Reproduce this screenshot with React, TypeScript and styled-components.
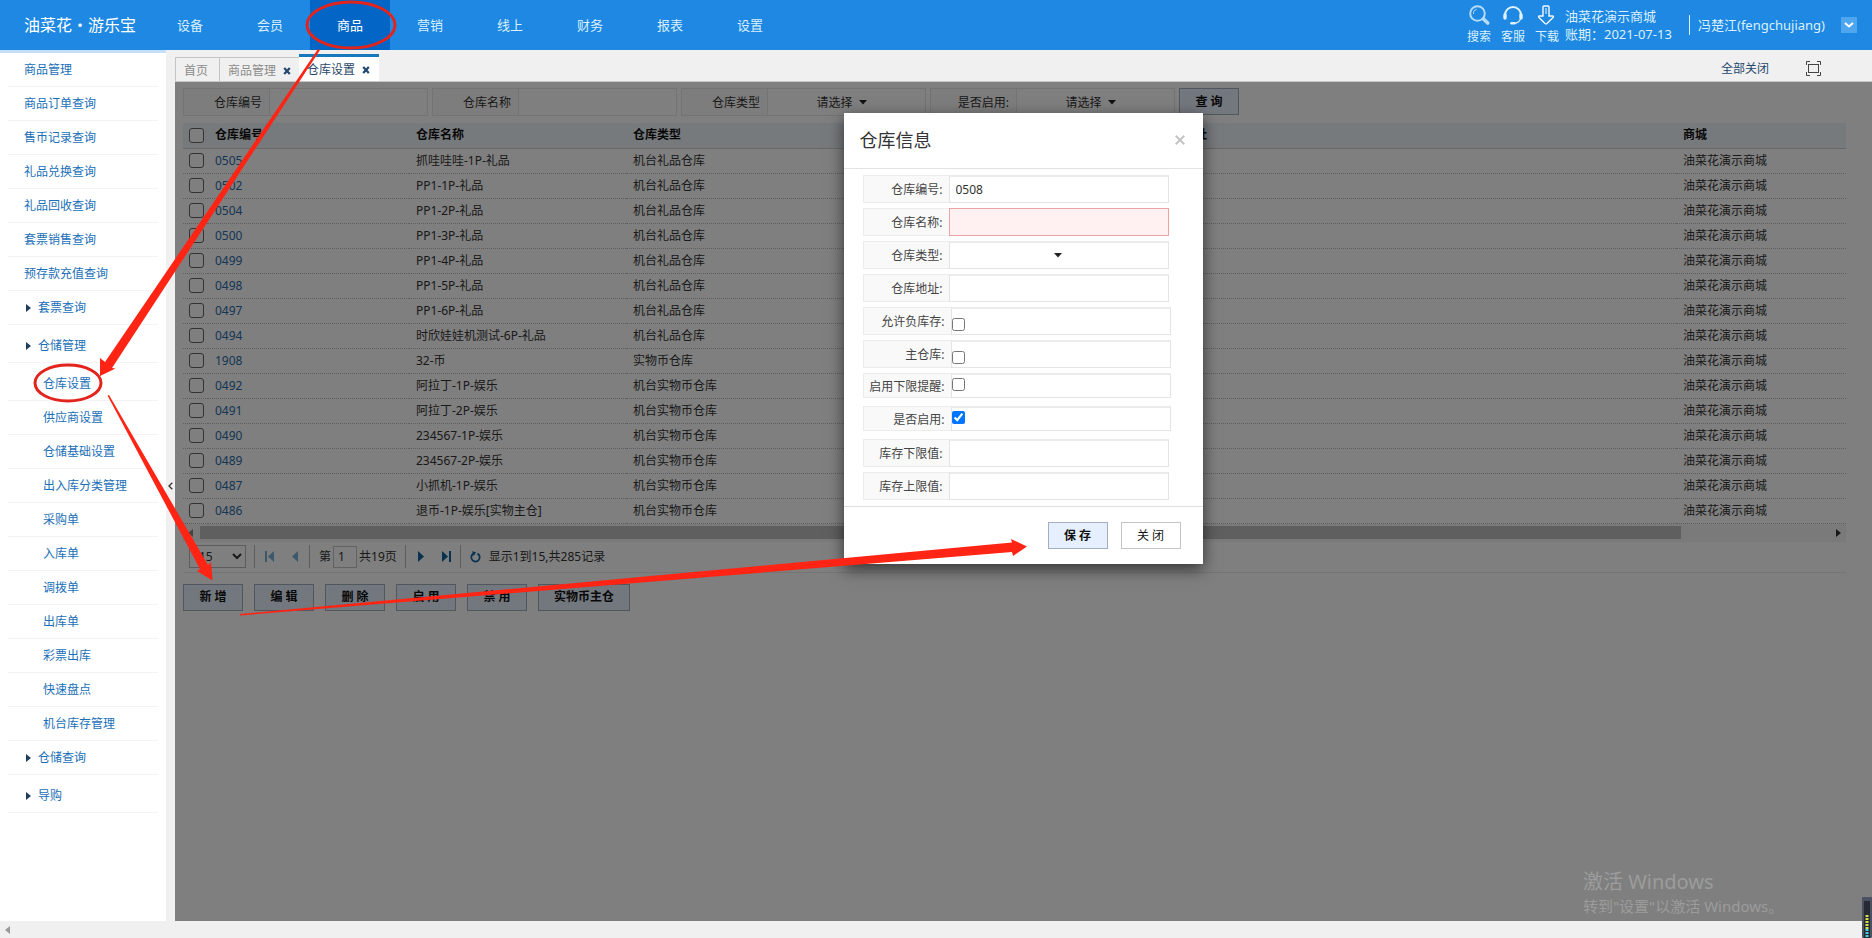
import React from "react";
import styled, { createGlobalStyle, css } from "styled-components";

const Global = createGlobalStyle`
  *, *::before, *::after { box-sizing: border-box; }
  html, body, #root { height: 100%; }
  body {
    margin: 0;
    overflow: hidden;
    background: #f0f0f0;
    color: #333;
    font: 12px/16px "Noto Sans", "Noto Sans CJK SC", sans-serif;
  }
  button, input, select { font: inherit; color: inherit; margin: 0; }
  a { color: inherit; text-decoration: none; }
`;

const Page = styled.div`
  position: relative;
  display: flex;
  flex-direction: column;
  height: 100vh;
`;

/* ---------- header ---------- */
const Header = styled.header`
  display: flex;
  flex: none;
  align-items: center;
  height: 50px;
  background: #1e88e2;
  color: #d9f0ff;
`;
const Logo = styled.div`
  width: 150px;
  padding-left: 24px;
  font-size: 16px;
  line-height: 24px;
  white-space: nowrap;
  color: #fff;
`;
const Nav = styled.nav`
  display: flex;
  flex: 1;
  height: 100%;
`;
const NavLink = styled.a<{ $active?: boolean }>`
  display: flex;
  width: 80px;
  align-items: center;
  justify-content: center;
  font-size: 13px;
  background: ${(p) => (p.$active ? "#0366c6" : "transparent")};
  color: ${(p) => (p.$active ? "#fff" : "#d9f0ff")};
`;
const Tools = styled.div`
  display: flex;
  gap: 10px;
`;
const Tool = styled.a`
  display: flex;
  flex-direction: column;
  align-items: center;
  width: 24px;
  gap: 4px;
  white-space: nowrap;
  svg { display: block; }
`;
const Store = styled.div`
  width: 130px;
  padding-left: 6px;
  font-size: 13px;
  line-height: 18px;
  white-space: nowrap;
`;
const Account = styled.div`
  display: flex;
  align-items: center;
  justify-content: space-between;
  width: 168px;
  height: 20px;
  margin-right: 15px;
  padding-left: 8px;
  border-left: 1px solid #d9f0ff;
  font-size: 13px;
`;
const AccountToggle = styled.button`
  display: grid;
  place-items: center;
  width: 16px;
  height: 16px;
  padding: 0;
  border: 0;
  background: #4ea6ef;
`;

/* ---------- sidebar ---------- */
const Body = styled.div`
  display: flex;
  flex: 1;
  min-height: 0;
`;
const Sidebar = styled.nav`
  flex: none;
  width: 166px;
  padding: 0 8px;
  border-top: 3px solid #c4e0f8;
  background: #fff;
`;
const SideLink = styled.a<{ $level: "top" | "group" | "sub"; $spaced?: boolean }>`
  display: flex;
  align-items: center;
  gap: 7px;
  height: ${(p) => (p.$spaced ? 38 : 34)}px;
  padding-top: ${(p) => (p.$spaced ? 4 : 0)}px;
  padding-left: ${(p) => ({ top: 16, group: 18, sub: 35 })[p.$level]}px;
  border-bottom: 1px solid #f3f3f3;
  color: #1b6fb8;
`;
const Collapse = styled.button`
  display: grid;
  place-items: center;
  flex: none;
  width: 9px;
  padding: 0;
  border: 0;
  background: #f0f0f0;
`;

/* ---------- tabs ---------- */
const Main = styled.main`
  display: flex;
  flex: 1;
  flex-direction: column;
  min-width: 0;
`;
const TabBar = styled.div`
  display: flex;
  flex: none;
  align-items: flex-end;
  height: 32px;
  border-bottom: 1px solid #c8c8c8;
`;
const Tab = styled.div<{ $active?: boolean }>`
  display: flex;
  align-items: center;
  gap: 7px;
  height: 24px;
  padding: 2px 8px 0 8px;
  border: 1px solid #c4c4c4;
  border-width: 1px 1px 0;
  margin-right: -1px;
  color: #8b8b8b;
  &:first-child { padding-right: 11px; }
  ${(p) =>
    p.$active &&
    css`
      height: 27px;
      padding-right: 9px;
      margin-right: 0;
      border: 0;
      border-top: 3px solid #1878bd;
      background: #fff;
      color: #2a4766;
    `}
`;
const TabClose = styled.button`
  display: grid;
  place-items: center;
  padding: 0;
  border: 0;
  background: none;
`;
const TabActions = styled.div`
  display: flex;
  align-items: center;
  align-self: center;
  gap: 37px;
  margin: 6px 51px 0 auto;
  color: #24476e;
`;
const PlainButton = styled.button`
  display: grid;
  place-items: center;
  padding: 0;
  border: 0;
  background: none;
`;

/* ---------- work area ---------- */
const Work = styled.section`
  position: relative;
  flex: 1;
  min-height: 0;
  padding: 6px 26px 0 8px;
  background: #fff;
`;
const Filters = styled.form`
  display: flex;
  gap: 4px;
  height: 28px;
`;
const Field = styled.label`
  display: flex;
  width: 245px;
  border: 1px solid #e6e6e6;
`;
const FieldName = styled.span`
  display: flex;
  flex: none;
  align-items: center;
  justify-content: flex-end;
  width: 86px;
  padding: 2px 7px 0 0;
  border-right: 1px solid #e6e6e6;
  background: #fbfbfb;
`;
const FieldInput = styled.input`
  flex: 1;
  min-width: 0;
  border: 0;
  padding: 0 6px;
  background: none;
`;
const SelectBox = styled.span`
  position: relative;
  display: flex;
  flex: 1;
  align-items: center;
  justify-content: center;
`;
const CenterSelect = styled.select`
  appearance: none;
  width: 100%;
  height: 100%;
  padding: 2px 24px 0 0;
  border: 0;
  background: none;
  text-align-last: center;
`;
const Caret = styled.svg<{ $shift?: boolean }>`
  position: absolute;
  left: calc(50% + ${(p) => (p.$shift ? 12 : -5)}px);
  pointer-events: none;
`;
const ActionButton = styled.button<{ $wide?: boolean; $plain?: boolean }>`
  width: ${(p) => (p.$wide ? 92 : 60)}px;
  height: 27px;
  padding: 0;
  border: 1px solid ${(p) => (p.$plain ? "#c4c4c4" : "#a3afbf")};
  background: ${(p) => (p.$plain ? "#fff" : "#e6effd")};
  color: #111;
  font-weight: ${(p) => (p.$plain ? 400 : 700)};
`;

const Table = styled.table`
  width: 100%;
  margin-top: 7px;
  border-collapse: collapse;
  table-layout: fixed;
  th, td {
    height: 25px;
    padding: 0 0 0 7px;
    text-align: left;
    white-space: nowrap;
    border-bottom: 1px dotted #bdbdbd;
  }
  th {
    background: #eff4fa;
    color: #111;
    border-bottom: 1px solid #d0d0d0;
  }
  td a { color: #2a6ca8; }
  th:first-child, td:first-child { padding-left: 6px; }
`;
const Check = styled.input`
  appearance: none;
  display: block;
  flex: none;
  width: 15px;
  height: 15px;
  border: 1px solid #666;
  border-radius: 3px;
  background: #fff;
`;
const DialogCheck = styled.input`
  width: 13px;
  height: 13px;
`;

const ScrollTrack = styled.div`
  display: flex;
  align-items: center;
  justify-content: space-between;
  height: 18px;
  padding: 0 5px;
  background: #f4f4f4;
`;
const ScrollThumb = styled.div`
  flex: 1;
  height: 13px;
  margin: 0 155px 0 7px;
  background: #bebebe;
`;
const Pager = styled.div`
  display: flex;
  align-items: center;
  height: 31px;
  padding-left: 6px;
  border-bottom: 1px solid #eaeaea;
`;
const PageSize = styled.select`
  width: 57px;
  height: 23px;
  padding-left: 5px;
  border: 1px solid #bbb;
  background: #fff;
`;
const PagerGroup = styled.div<{ $gap: number }>`
  display: flex;
  align-items: center;
  height: 23px;
  gap: ${(p) => p.$gap}px;
  margin-left: 8px;
  padding-left: 9px;
  border-left: 1px solid #bbb;
  white-space: nowrap;
`;
const PageNumber = styled.input`
  width: 24px;
  height: 22px;
  padding: 0 4px;
  border: 1px solid #c4c4c4;
`;
const Actions = styled.div`
  display: flex;
  gap: 11px;
  margin-top: 11px;
`;
const Shade = styled.div`
  position: absolute;
  inset: 0;
  background: rgba(0, 0, 0, 0.5);
`;

/* ---------- dialog ---------- */
const Dialog = styled.form`
  position: absolute;
  top: 31px;
  left: 50%;
  width: 359px;
  margin-left: -180px;
  background: #fff;
  box-shadow: 0 5px 15px rgba(0, 0, 0, 0.6);
`;
const DialogHead = styled.div`
  display: flex;
  align-items: center;
  justify-content: space-between;
  height: 56px;
  padding: 0 18px 2px 16px;
  border-bottom: 1px solid #e3e3e3;
`;
const DialogTitle = styled.h2`
  margin: 0;
  font-size: 18px;
  line-height: 24px;
  font-weight: 400;
`;
const DialogFields = styled.div`
  display: grid;
  grid-auto-rows: 33px;
  align-items: start;
  padding: 6px 0 0 19px;
  height: 337px;
`;
const Row = styled.label<{ $check?: boolean; $short?: boolean }>`
  display: grid;
  grid-template-columns: ${(p) => (p.$check ? 88 : 86)}px 220px;
  height: ${(p) => (p.$short ? 25 : 28)}px;
`;
const RowName = styled.span`
  display: flex;
  align-items: center;
  justify-content: flex-end;
  padding: 2px 6px 0 0;
  border: 1px solid #ececec;
  border-right: 0;
  background: #f9f9f9;
  white-space: nowrap;
  color: #444;
`;
const RowBox = styled.span<{ $low?: boolean; $high?: boolean }>`
  position: relative;
  display: flex;
  align-items: center;
  padding-top: ${(p) => (p.$low ? 6 : 0)}px;
  padding-bottom: ${(p) => (p.$high ? 3 : 0)}px;
  border: 1px solid #e4e4e4;
  border-top: 2px solid #ebebeb;
`;
const RowInput = styled.input<{ $error?: boolean }>`
  min-width: 0;
  padding: 0 6px;
  border: 1px solid #e4e4e4;
  border-top: 2px solid #ebebeb;
  background: #fff;
  ${(p) =>
    p.$error &&
    css`
      border: 1px solid #eda3a3;
      background: #fff1f1;
    `}
`;
const DialogFoot = styled.div`
  display: flex;
  justify-content: flex-end;
  gap: 13px;
  height: 58px;
  padding: 15px 22px 0;
  border-top: 1px solid #dedede;
`;

/* ---------- bottom and overlays ---------- */
const BottomBar = styled.div`
  display: flex;
  flex: none;
  align-items: center;
  height: 17px;
  padding-left: 5px;
  background: #f0f0f0;
`;
const Watermark = styled.div`
  position: absolute;
  right: 92px;
  bottom: 20px;
  width: 197px;
  color: #9c9c9c;
  font-size: 15px;
  line-height: 24px;
  white-space: nowrap;
  pointer-events: none;
`;
const WatermarkTitle = styled.div`
  font-size: 20px;
`;
const Meter = styled.svg`
  position: absolute;
  right: 0;
  bottom: 0;
`;
const Marks = styled.svg`
  position: absolute;
  inset: 0;
  pointer-events: none;
`;

type SideItem = [string, "top" | "group" | "sub", boolean?];
const sideItems: SideItem[] = [
  ["商品管理", "top"],
  ["商品订单查询", "top"],
  ["售币记录查询", "top"],
  ["礼品兑换查询", "top"],
  ["礼品回收查询", "top"],
  ["套票销售查询", "top"],
  ["预存款充值查询", "top"],
  ["套票查询", "group"],
  ["仓储管理", "group", true],
  ["仓库设置", "sub", true],
  ["供应商设置", "sub"],
  ["仓储基础设置", "sub"],
  ["出入库分类管理", "sub"],
  ["采购单", "sub"],
  ["入库单", "sub"],
  ["调拨单", "sub"],
  ["出库单", "sub"],
  ["彩票出库", "sub"],
  ["快速盘点", "sub"],
  ["机台库存管理", "sub"],
  ["仓储查询", "group"],
  ["导购", "group", true],
];

const rows = [
  ["0505", "抓哇哇哇-1P-礼品", "机台礼品仓库"],
  ["0502", "PP1-1P-礼品", "机台礼品仓库"],
  ["0504", "PP1-2P-礼品", "机台礼品仓库"],
  ["0500", "PP1-3P-礼品", "机台礼品仓库"],
  ["0499", "PP1-4P-礼品", "机台礼品仓库"],
  ["0498", "PP1-5P-礼品", "机台礼品仓库"],
  ["0497", "PP1-6P-礼品", "机台礼品仓库"],
  ["0494", "时欣娃娃机测试-6P-礼品", "机台礼品仓库"],
  ["1908", "32-币", "实物币仓库"],
  ["0492", "阿拉丁-1P-娱乐", "机台实物币仓库"],
  ["0491", "阿拉丁-2P-娱乐", "机台实物币仓库"],
  ["0490", "234567-1P-娱乐", "机台实物币仓库"],
  ["0489", "234567-2P-娱乐", "机台实物币仓库"],
  ["0487", "小抓机-1P-娱乐", "机台实物币仓库"],
  ["0486", "退币-1P-娱乐[实物主仓]", "机台实物币仓库"],
];

const CrossIcon = () => (
  <svg width="8" height="8" viewBox="0 0 8 8">
    <path d="M1.2 1l5.6 6M6.8 1L1.2 7" stroke="#24476e" strokeWidth="2.2" />
  </svg>
);

const DropCaret = ({ shift }: { shift?: boolean }) => (
  <Caret $shift={shift} width="8" height="5" viewBox="0 0 8 5">
    <path d="M0 0h8L4 4.5z" fill="#222" />
  </Caret>
);

const PagerIcon = ({ d, color, label }: { d: string; color: string; label: string }) => (
  <PlainButton type="button" aria-label={label}>
    <svg width="11" height="11" viewBox="0 0 11 11">
      <path d={d} fill={color} />
    </svg>
  </PlainButton>
);

export default function App() {
  return (
    <Page>
      <Global />
      <Header>
        <Logo>油菜花・游乐宝</Logo>
        <Nav>
          {["设备", "会员", "商品", "营销", "线上", "财务", "报表", "设置"].map((n) => (
            <NavLink key={n} href="#" $active={n === "商品"}>
              {n}
            </NavLink>
          ))}
        </Nav>
        <Tools>
          <Tool href="#">
            <svg width="22" height="20" viewBox="0 0 22 20" fill="none" stroke="#b4dcfb">
              <circle cx="9.5" cy="8.5" r="7.3" strokeWidth="2" />
              <path d="M5.5 9a4 4 0 0 1 3-4.500" strokeWidth="1" />
              <path d="M15.500 14l4.200 4" strokeWidth="3.600" strokeLinecap="round" />
            </svg>
            搜索
          </Tool>
          <Tool href="#">
            <svg width="20" height="20" viewBox="0 0 20 20" fill="none" stroke="#e0f2ff">
              <path d="M2 10a8 8 0 0 1 16 0" strokeWidth="2" />
              <path d="M2 10v3M18 10v3" strokeWidth="3.400" strokeLinecap="round" />
              <path d="M17.500 14c-1 2.500-3 4-6 4.300" strokeWidth="1.200" />
              <path d="M8.500 18.300h3" strokeWidth="2.600" strokeLinecap="round" />
            </svg>
            客服
          </Tool>
          <Tool href="#">
            <svg width="20" height="20" viewBox="0 0 20 20" fill="none" stroke="#f2faff">
              <path
                d="M6 2q0-1 1-1h4q1 0 1 1v9h3.500q1.500.2.500 1.500l-6 6q-1 .8-2 0l-6-6q-1-1.300.5-1.500H6z"
                strokeWidth="1.400"
              />
              <path d="M9 3v6" strokeWidth="1" />
            </svg>
            下载
          </Tool>
        </Tools>
        <Store>
          油菜花演示商城
          <br />
          账期：2021-07-13
        </Store>
        <Account>
          冯楚江(fengchujiang)
          <AccountToggle aria-label="账户菜单">
            <svg width="10" height="6" viewBox="0 0 10 6" fill="none">
              <path d="M1 1l4 3.500L9 1" stroke="#fff" strokeWidth="2" />
            </svg>
          </AccountToggle>
        </Account>
      </Header>

      <Body>
        <Sidebar>
          {sideItems.map(([name, level, spaced]) => (
            <SideLink key={name} href="#" $level={level} $spaced={spaced}>
              {level === "group" && (
                <svg width="5" height="8" viewBox="0 0 5 8">
                  <path d="M0 0l5 4-5 4z" fill="#1f3d5c" />
                </svg>
              )}
              {name}
            </SideLink>
          ))}
        </Sidebar>
        <Collapse aria-label="收起菜单">
          <svg width="5" height="8" viewBox="0 0 5 8" fill="none">
            <path d="M4.300.700L1 4l3.300 3.300" stroke="#333" strokeWidth="1.300" />
          </svg>
        </Collapse>

        <Main>
          <TabBar>
            <Tab>首页</Tab>
            <Tab>
              商品管理
              <TabClose aria-label="关闭商品管理">
                <CrossIcon />
              </TabClose>
            </Tab>
            <Tab $active>
              仓库设置
              <TabClose aria-label="关闭仓库设置">
                <CrossIcon />
              </TabClose>
            </Tab>
            <TabActions>
              <PlainButton>全部关闭</PlainButton>
              <PlainButton aria-label="全屏">
                <svg width="15" height="15" viewBox="0 0 15 15" fill="none" stroke="#444">
                  <path d="M.5 4V.5H4M11 .5h3.500V4M14.500 11v3.500H11M4 14.500H.5V11" />
                  <rect x="2.500" y="3.500" width="10" height="8" />
                </svg>
              </PlainButton>
            </TabActions>
          </TabBar>

          <Work>
            <Filters>
              <Field>
                <FieldName>仓库编号</FieldName>
                <FieldInput />
              </Field>
              <Field>
                <FieldName>仓库名称</FieldName>
                <FieldInput />
              </Field>
              {["仓库类型", "是否启用:"].map((n) => (
                <Field key={n}>
                  <FieldName>{n}</FieldName>
                  <SelectBox>
                    <CenterSelect>
                      <option>请选择</option>
                    </CenterSelect>
                    <DropCaret shift />
                  </SelectBox>
                </Field>
              ))}
              <ActionButton type="button">查 询</ActionButton>
            </Filters>

            <Table>
              <colgroup>
                <col width="25" />
                <col width="201" />
                <col width="217" />
                <col width="526" />
                <col />
                <col width="170" />
              </colgroup>
              <thead>
                <tr>
                  <th>
                    <Check type="checkbox" aria-label="全选" />
                  </th>
                  <th>仓库编号</th>
                  <th>仓库名称</th>
                  <th>仓库类型</th>
                  <th>仓库地址</th>
                  <th>商城</th>
                </tr>
              </thead>
              <tbody>
                {rows.map(([code, name, type]) => (
                  <tr key={code}>
                    <td>
                      <Check type="checkbox" aria-label={code} />
                    </td>
                    <td>
                      <a href="#">{code}</a>
                    </td>
                    <td>{name}</td>
                    <td>{type}</td>
                    <td />
                    <td>油菜花演示商城</td>
                  </tr>
                ))}
              </tbody>
            </Table>

            <ScrollTrack>
              <svg width="5" height="8" viewBox="0 0 5 8">
                <path d="M5 0L0 4l5 4z" fill="#888" />
              </svg>
              <ScrollThumb />
              <svg width="5" height="8" viewBox="0 0 5 8">
                <path d="M0 0l5 4-5 4z" fill="#333" />
              </svg>
            </ScrollTrack>
            <Pager>
              <PageSize defaultValue="15" aria-label="每页条数">
                <option>15</option>
              </PageSize>
              <PagerGroup $gap={15}>
                <PagerIcon label="首页" color="#7ab0d4" d="M1 0h2v11H1zM10 0v11L4 5.500z" />
                <PagerIcon label="上一页" color="#7ab0d4" d="M8 0v11L2 5.500z" />
              </PagerGroup>
              <PagerGroup $gap={2}>
                第
                <PageNumber defaultValue="1" aria-label="页码" />
                共19页
              </PagerGroup>
              <PagerGroup $gap={15}>
                <PagerIcon label="下一页" color="#11659f" d="M3 0v11l6-5.500z" />
                <PagerIcon label="末页" color="#11659f" d="M1 0v11l6-5.500zM8 0h2v11H8z" />
              </PagerGroup>
              <PagerGroup $gap={8}>
                <PlainButton type="button" aria-label="刷新">
                  <svg width="11" height="12" viewBox="0 0 11 12" fill="none">
                    <path d="M7.500 2.600a4.200 4.200 0 1 1-4 0" stroke="#11659f" strokeWidth="1.800" />
                    <path d="M2 .3l4 1L3.800 5z" fill="#11659f" />
                  </svg>
                </PlainButton>
                显示1到15,共285记录
              </PagerGroup>
            </Pager>
            <Actions>
              {["新 增", "编 辑", "删 除", "启 用", "禁 用"].map((n) => (
                <ActionButton key={n}>{n}</ActionButton>
              ))}
              <ActionButton $wide>实物币主仓</ActionButton>
            </Actions>

            <Shade />
            <Dialog>
              <DialogHead>
                <DialogTitle>仓库信息</DialogTitle>
                <PlainButton type="button" aria-label="关闭对话框">
                  <svg width="10" height="10" viewBox="0 0 10 10">
                    <path d="M.7.700l8.600 8.600M9.300.700L.7 9.300" stroke="#c4c4c4" strokeWidth="2" />
                  </svg>
                </PlainButton>
              </DialogHead>
              <DialogFields>
                <Row>
                  <RowName>仓库编号:</RowName>
                  <RowInput defaultValue="0508" />
                </Row>
                <Row>
                  <RowName>仓库名称:</RowName>
                  <RowInput $error />
                </Row>
                <Row>
                  <RowName>仓库类型:</RowName>
                  <RowBox>
                    <CenterSelect>
                      <option />
                    </CenterSelect>
                    <DropCaret />
                  </RowBox>
                </Row>
                <Row>
                  <RowName>仓库地址:</RowName>
                  <RowInput />
                </Row>
                <Row $check>
                  <RowName>允许负库存:</RowName>
                  <RowBox $low>
                    <DialogCheck type="checkbox" />
                  </RowBox>
                </Row>
                <Row $check>
                  <RowName>主仓库:</RowName>
                  <RowBox $low>
                    <DialogCheck type="checkbox" />
                  </RowBox>
                </Row>
                <Row $check $short>
                  <RowName>启用下限提醒:</RowName>
                  <RowBox $high>
                    <DialogCheck type="checkbox" />
                  </RowBox>
                </Row>
                <Row $check $short>
                  <RowName>是否启用:</RowName>
                  <RowBox $high>
                    <DialogCheck type="checkbox" defaultChecked />
                  </RowBox>
                </Row>
                <Row>
                  <RowName>库存下限值:</RowName>
                  <RowInput />
                </Row>
                <Row>
                  <RowName>库存上限值:</RowName>
                  <RowInput />
                </Row>
              </DialogFields>
              <DialogFoot>
                <ActionButton type="button">保 存</ActionButton>
                <ActionButton type="button" $plain>
                  关 闭
                </ActionButton>
              </DialogFoot>
            </Dialog>
          </Work>
        </Main>
      </Body>

      <BottomBar>
        <svg width="5" height="8" viewBox="0 0 5 8">
          <path d="M5 0L0 4l5 4z" fill="#999" />
        </svg>
      </BottomBar>

      <Watermark>
        <WatermarkTitle>激活 Windows</WatermarkTitle>
        转到"设置"以激活 Windows。
      </Watermark>

      <Meter width="10" height="41" viewBox="0 0 10 41">
        <rect width="10" height="41" rx="1" fill="#4a5163" />
        <rect x="2" y="4" width="6" height="37" fill="#262a33" />
        <path d="M5 18v14" stroke="#d3e04a" strokeWidth="3" strokeDasharray="2 1" />
        <path d="M5 32v9" stroke="#45cfe0" strokeWidth="3" strokeDasharray="2 1" />
      </Meter>

      <Marks width="1872" height="938" viewBox="0 0 1872 938">
        <g fill="none" stroke="#e3241c" strokeWidth="3">
          <ellipse cx="351" cy="25" rx="44" ry="23" />
          <ellipse cx="68" cy="383" rx="33" ry="18" />
        </g>
        <g fill="#ff2414">
          <path d="M318 49l2 1L112 368l3.500.5L100 376v-18l5 4z" />
          <path d="M107.500 395.500l1.500-.5L208 565l3-3 1.500 18.500L197 571l3-2z" />
          <path d="M240 614v1.500L1012 552l1 4 14-9.500-16-7.500 1 3.500z" />
        </g>
      </Marks>
    </Page>
  );
}
